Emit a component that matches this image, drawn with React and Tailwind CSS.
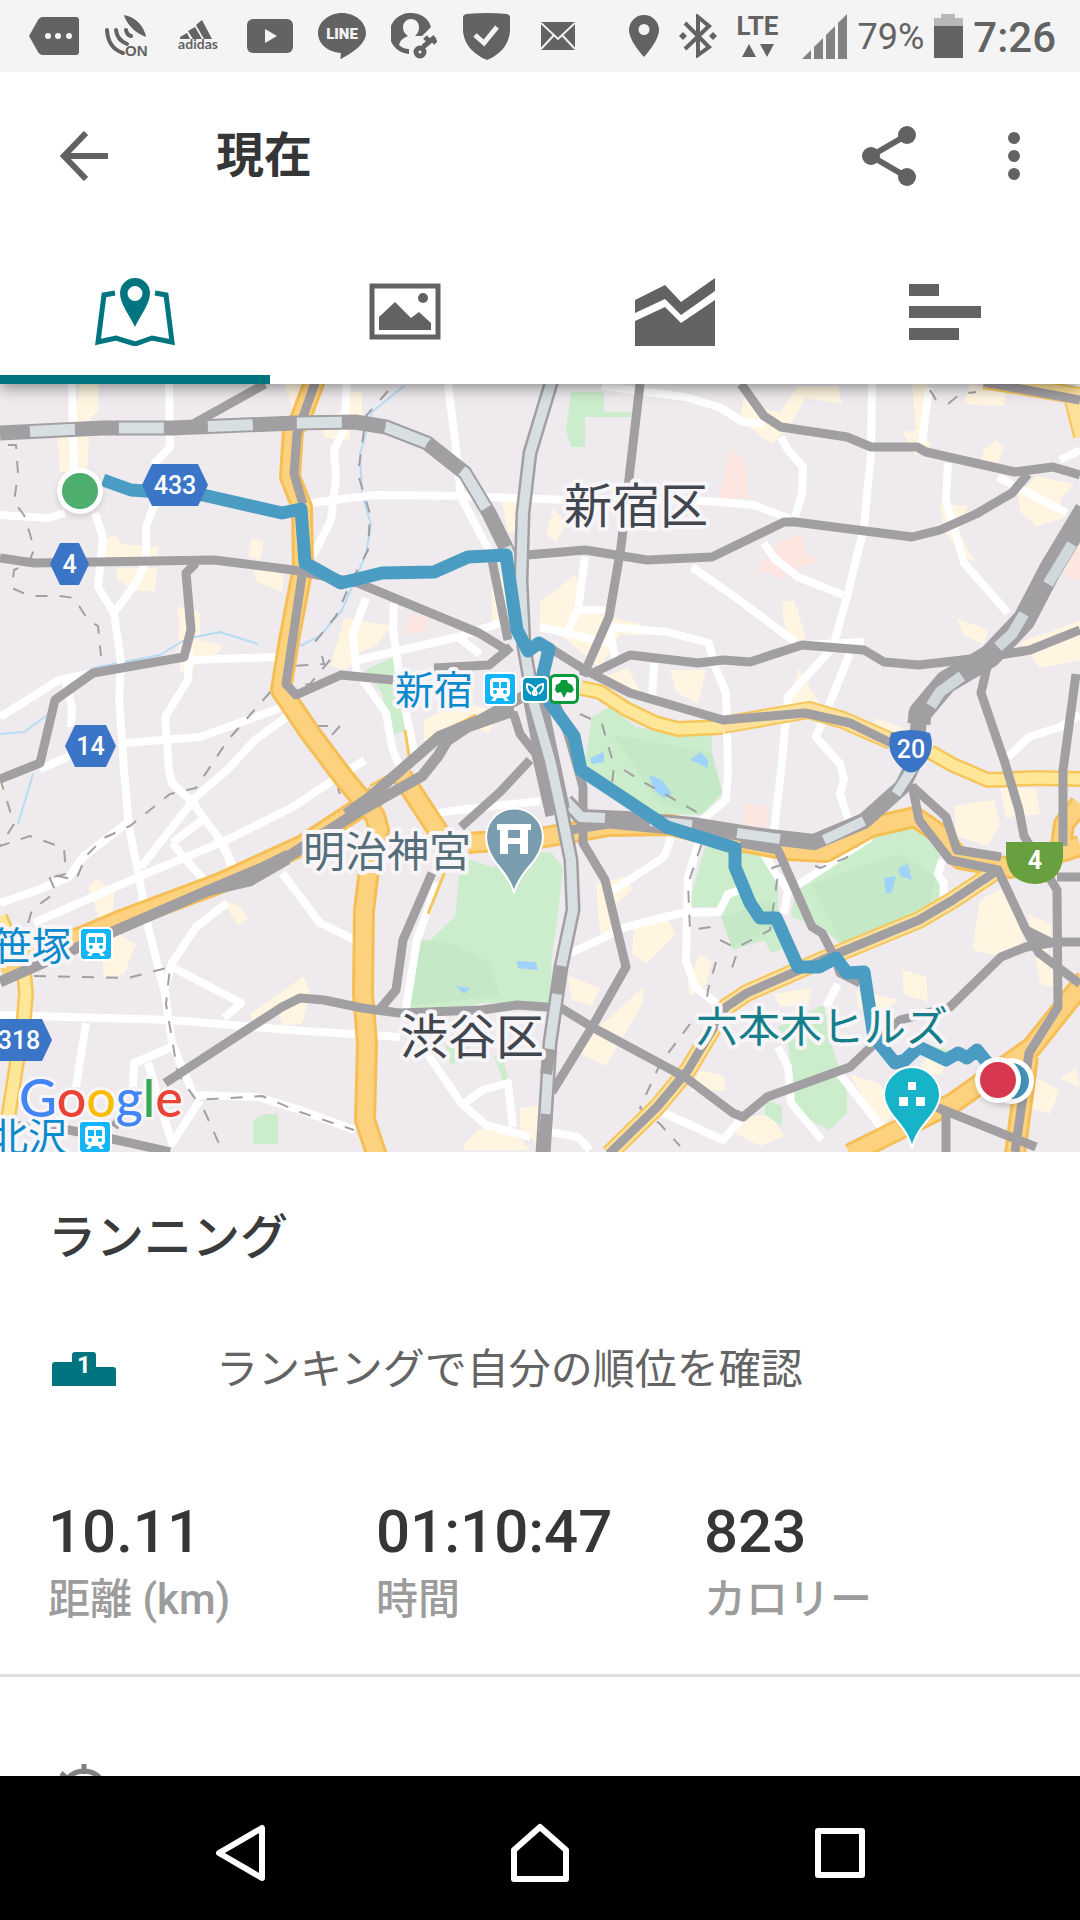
import React from 'react';

// ---------- map data (map canvas is 1080 x 768) ----------

const blocks = [
  'M80 0H99L98 28L90 34L87 88H60L57 50L72 46Z',
  'M284 0H312L296 34Z',
  'M345 8H362V34L350 40V56L325 54L318 36L345 26Z',
  'M103 158L114 150L122 160L158 163V174H105Z',
  'M117 184H158L155 208L134 206L117 196Z',
  'M252 154L264 158L260 176L248 172Z',
  'M254 182L284 190L282 208L256 198Z',
  'M178 222L200 228V256L224 262L216 270L196 278L192 288H180Z',
  'M344 234L392 242L376 262L360 268L346 286L330 282L338 256Z',
  'M500 110H520V146L508 150Z',
  'M492 204L506 184L516 214L508 250L492 238Z',
  'M424 336L460 316L500 330L488 350L470 340L440 364L424 356Z',
  'M744 12L760 24L780 28L798 2H838L842 20L806 14L788 44L772 60L740 36Z',
  'M912 0H928L922 50L932 60L916 72L902 48L916 46Z',
  'M970 0L1006 8L1004 22L964 20Z',
  'M996 56L1004 64L998 80L1014 86L980 80L984 66Z',
  'M1036 92L1074 100L1060 116L1064 134L1036 142L1020 128L1018 112Z',
  'M554 124L566 140L556 158L546 150Z',
  'M540 218L576 190L582 226L640 240L646 252L620 250L600 284L560 250L540 242Z',
  'M596 296L628 284L640 308L624 310Z',
  'M670 286H706L702 304L698 320L676 308Z',
  'M782 218L794 216L806 254L796 262L784 240Z',
  'M798 284L824 326L790 322Z',
  'M940 120L968 122L958 148L976 178L962 172L944 146Z',
  'M956 234L988 246L984 260L964 252Z',
  'M1020 258L1050 248L1080 236V276L1040 284Z',
  'M876 334L908 346L900 356L872 344Z',
  'M0 396L6 400L0 406Z',
  'M96 494L114 508L112 546L136 560L124 590L104 594L98 530L88 504Z',
  'M224 448L236 480L226 492Z',
  'M222 516L240 522L248 534L238 542Z',
  'M250 630L284 606L304 592L310 610L302 640L282 642L278 624L254 640Z',
  'M464 760L478 746L510 742L530 766H464Z',
  'M520 724L538 722V760L520 744Z',
  'M596 500L628 492L632 506L614 522L622 546L600 550Z',
  'M634 542L668 536L676 550L646 580L632 570Z',
  'M568 592L600 604L592 622L572 616Z',
  'M588 650L614 630L644 602L642 620L606 682L582 670Z',
  'M954 422L994 416L1000 440L988 462L956 452Z',
  'M1000 404H1036L1040 430L1006 434Z',
  'M980 516L1010 500L1024 556L1006 574L972 566Z',
  'M1028 530L1052 540L1048 570L1064 606L1040 600Z',
  'M902 586L926 592L928 618L904 610Z',
  'M700 570L712 578L706 600L690 612L688 598Z',
  'M774 610L812 604L808 622L780 622Z',
  'M856 606L898 616L880 630L858 624Z',
  'M700 686L724 692L726 706L690 708Z',
  'M930 662L946 672L942 690L920 690Z',
  'M1032 692L1060 706L1050 730L1030 724Z',
  'M1060 694L1076 684L1080 704Z',
  'M740 734L770 730L784 752L760 762L736 750Z',
  'M850 690L880 700L894 730L880 744Z',
];

const parks = [
  'M571 8H604V28H631V33H585V63H571L566 46Z',
  'M365 286L393 273L406 346L389 353L382 309Z',
  'M592 333L609 323L636 343L678 351H712V379L723 409L702 431L660 430L630 420L585 379Z',
  'M461 473L492 483L520 466L552 469L563 484L557 539L552 570L550 619H482L440 630L410 623L418 556L430 556L455 533Z',
  'M705 463L764 469L778 496V523L788 543L781 566L771 569L764 556L733 566L721 533L726 516L719 523H688Z',
  'M878 443L919 446L940 469L936 493L943 509L936 523L843 563L822 543L791 533L795 506Z',
  'M253 736L264 730H278V760H253Z',
  'M778 643L824 620L828 650L847 709V729L829 746L795 729L788 659Z',
  'M446 662L470 656L468 676L450 680Z',
  'M494 672L500 668L508 692L504 700Z',
  'M766 716L782 722V742L764 730Z',
  'M930 662L960 668L958 676L932 672Z',
];

const parkShades = [
  'M613 351L712 369L722 408L700 430L660 420Z',
  'M418 556L455 560L490 580L500 612L410 622Z',
  'M812 500L900 470L936 493L930 520L843 560Z',
  'M722 534L770 516L776 540L732 564Z',
];

const hospitals = [
  'M733 64L745 80L749 114H719L728 73Z',
  'M780 158L800 149L806 168L818 178L800 182L781 195L770 188L754 190L766 174Z',
  'M744 419L767 423V443L743 441Z',
  'M412 229L430 235L424 248L404 250Z',
  'M1072 168L1080 160V196L1064 192Z',
];

const ponds = [
  'M590 374L604 368V378L592 380Z',
  'M690 376L700 368L708 376V384Z',
  'M649 391L662 396L672 410L664 414L654 406Z',
  'M517 577L536 578L538 586L518 584Z',
  'M456 602L470 604L464 610Z',
  'M884 494L896 492L892 508L886 510Z',
  'M898 484L908 480L912 496L900 492Z',
];

const streets = [
  'M72 0L74 86M95 129L103 153L98 203L114 229L121 279L119 313L124 386L129 443L139 493L148 543L165 609L172 659L193 709',
  'M169 0L170 63L155 79L155 119L146 143V176L138 196L114 229',
  'M0 131L48 134L65 129',
  'M448 0L455 56L461 113L496 180',
  'M347 0L344 46L334 66L336 93L331 136L313 172',
  'M303 120L375 111L461 112L625 118L664 115L720 118L754 121L790 135',
  'M366 214L353 249L356 286L386 329L392 363L402 390',
  'M394 219L393 246L399 289L406 329L415 373',
  'M358 276L458 253L500 239M458 253L480 270',
  'M189 276L279 273',
  'M189 265L188 296L165 333L169 386L172 399L193 419L220 456L234 486',
  'M0 333L59 296L93 289M65 296L72 323L71 343',
  'M124 359L200 353L289 321M296 326L255 356L227 386L196 413L141 483',
  'M40 385L72 371',
  'M0 519L38 506L69 493L83 473L127 439',
  'M34 539L138 493L227 456L293 423L338 393L365 376',
  'M172 459L188 478L205 497M172 459L205 434',
  'M282 489L320 539L355 556',
  'M227 519L196 543L172 579L165 603',
  'M172 583L241 619L224 634',
  'M0 631L172 636L290 646L400 653',
  'M86 639L76 703M172 663L134 679L133 703M148 679L172 759L200 716',
  'M193 711L258 713L300 726L355 746',
  'M427 669L461 719L486 741L530 753M465 719L482 706L508 699L513 743',
  'M437 429L475 424L540 417',
  'M437 499L417 556L405 630',
  'M602 2L685 13L719 23L743 38L764 39',
  'M781 53L788 66L803 83L802 110L795 133',
  'M872 0L871 69L864 143L847 213L833 263L788 313L781 386L774 446',
  'M929 4L922 59M948 79L946 116L964 179L1008 229',
  'M850 269L816 353L840 380L844 395L840 410L850 440',
  'M692 183L742 218L795 258M802 261L864 258',
  'M764 159L775 175L798 193L843 211',
  'M585 173L578 226L568 246M578 226H606M540 243L609 259M609 240L616 280',
  'M612 243L667 248L709 259L714 280L726 309L728 386L726 416L702 436',
  'M654 279L652 313',
  'M998 93L1067 129M1080 66L1060 76',
  'M1008 373L1029 353L1060 343L1080 331',
  'M700 455L688 493L686 576L695 603L720 622',
  'M571 569L626 543L681 529L719 528L728 510L740 506',
  'M671 453L664 473L609 509',
  'M764 470L776 490L788 506L784 530',
  'M795 503L871 453M942 476L938 490L944 500L943 519',
  'M838 600L826 623M778 663L788 683L791 719L822 756',
  'M836 686L850 703L881 743M664 729L723 756L740 736M550 748L578 753L590 766',
];

const boundaries = [
  'M8 61H16L18 90L14 118L24 131L30 150L34 166L28 180L14 186L12 204L30 212L60 212L74 214L88 236L98 242L101 272',
  'M388 7L366 32L358 90L370 130L368 166L352 196L336 232L310 264',
  'M322 272L324 280L290 282M330 276L310 300L272 306L228 356L196 404L170 410L130 442L104 454L86 472L76 496L48 490L56 508L32 526L26 546',
  'M0 394L14 440L0 462L30 452L64 464L66 490L48 494',
  'M300 326L312 342L340 342L322 362L340 410',
  'M34 592L128 594L170 583L166 620L178 690L196 716L262 712L300 728L354 746M204 726L220 762',
  'M580 330L602 340L614 382L612 400',
  'M624 386L640 396L700 430L705 450L688 500L690 546L718 542M720 556L736 564L770 546L778 490L772 484L800 474L820 484L846 474L872 446',
  'M716 578L708 606L706 622M690 640L660 680L640 724L660 740L680 762M736 572L732 584',
  'M930 6L936 16M948 20L960 10L976 8',
];

const streams = [
  'M404 2L372 28L360 70L362 110L371 140L366 170L342 226L320 252L300 262',
  'M93 284L160 271L186 255L220 248L258 260',
  'M0 350L24 348L46 332M33 390L18 440',
];

const highways = [
  'M315 -4L300 36L293 46L290 93L302 123L303 183L289 256L281 306L310 349L344 394L375 432L379 446L370 479L364 526L363 609L367 659L365 736L377 772',
  'M402 392L440 450',
  'M0 583L86 551L124 535L220 499L303 461L358 425L376 412',
  'M468 459L540 454L609 442L671 441L733 456L788 466L826 468L871 443L915 433L940 450L960 475L1010 484L1080 462',
  'M1086 595L1032 663L953 719L884 753L850 770M1028 672L1015 770M1080 420L1064 440L1060 470',
];

const mainRoads = [
  'M609 770L657 723L688 686L726 623L747 609L822 576L919 536L953 516L998 486',
  'M723 341L809 326L843 336L891 357',
  'M984 -4L1080 12M1072 12L1082 52',
];

// single thin edges of roads that run beside a rail line
const roadEdges = ['M370 402L402 384L446 346L476 331', 'M405 346L410 378', 'M448 480L440 500L428 530'];

const yellowRoads = [
  'M581 304L600 308L626 325L655 339L678 345L723 343',
  'M930 368L953 381L988 396L1036 394L1080 395',
  'M0 533L24 589L26 609L24 633L8 735',
];

const rails = [
  'M195 39L265 0',
  'M0 174L34 179L214 176L293 186L358 199L479 249L505 265',
  'M196 179L186 189L191 246L184 273L93 289L55 316L40 379L0 395',
  'M316 -4L303 33L297 50L294 90L303 120M303 185L286 300L296 311L341 291L393 296',
  'M492 176L508 256M434 284L489 281L511 263',
  'M640 0L621 163L609 233L583 292',
  'M741 0L764 32L781 43L847 53L871 63L917 63L926 68L1015 88L1053 83L1080 91',
  'M1028 90L1012 109L976 130L940 146L912 153L795 138L784 138L712 173L647 176L585 166L527 171',
  'M591 290L630 271L698 279L723 276L750 278L802 261L864 266L884 278L919 281L988 273L1030 266L1080 246',
  'M990 270L981 309L1005 379L1019 426L1024 452L1057 506L1058 623L1029 669L1015 768',
  'M1076 290L1063 386L1063 462',
  'M550 264L585 286L630 309L723 336L805 329L850 339L891 359',
  'M461 443L500 408L530 376M432 489L403 556L396 606L380 625',
  'M165 699L282 623L300 614L324 616L362 624L399 629L482 626L517 621L561 624L592 643L685 693L733 729L743 733L767 713L850 683L871 663L900 636L950 623L1001 573L1026 563L1057 558H1080',
  'M556 320L568 350L580 392L583 403V459L605 496L626 583L592 643L552 708',
  'M740 459L778 466L812 543L822 549L836 576L840 589L860 599',
  'M912 400L919 436L950 476L998 486L1026 546L1039 569L1080 600M1026 546L1050 558',
  'M914 404L946 433L957 466L1001 473M1057 493H1080',
  'M936 723L1036 763M946 729V768',
  'M0 740L69 746L117 756L170 768M131 719L114 743',
  'M609 770L657 723L688 686L726 623L747 609L822 576L919 536L953 516L998 486',
  'M984 -2L1080 16',
  'M513 328L520 350L536 370L550 432M570 446L609 440L690 448',
];

const wideRails = [
  'M0 598L117 546L207 507L286 474L358 428L422 392L438 372L450 352',
  'M346 430L370 413L440 352L480 336L513 318L550 298',
];

const chuoLine = 'M566 417L581 433L626 435L692 441L754 451L814 458L864 437L902 403L916 375L919 333L946 296L990 272L1022 236L1050 186L1086 126';
const seibuLine = 'M0 49L103 44L172 44L296 39L355 38L386 43L427 59L465 89L489 129L512 176';
const yamanoteLine = 'M552 -4L530 69L523 129L521 196L524 263L534 320L550 376L561 426L571 476L573 526L561 583L550 659L543 770';

const route =
  'M103 96L131 106L203 111L282 129L301 125L305 179L341 199L382 189L434 188L468 173L506 171L517 246L528 267L539 259L549 265L543 290L550 319L574 352L581 386L667 443L735 464V483L750 519L760 534H776L798 583H819L836 574L847 589L864 588L874 653L895 679L905 676L919 663L946 676L958 669L967 674L977 666L990 682';

const lines = (list, color, width, extra = {}) =>
  list.map((d, i) => <path key={i} d={d} fill="none" stroke={color} strokeWidth={width} strokeLinejoin="round" {...extra} />);

const fills = (list, color) => list.map((d, i) => <path key={i} d={d} fill={color} />);

const TrainIcon = ({ x, y }) => (
  <g transform={`translate(${x} ${y})`}>
    <rect x="-1" y="-1" width="34" height="34" rx="5" fill="#fff" />
    <rect x="1" y="1" width="30" height="30" rx="3" fill="#12b5f8" />
    <path d="M10 5H22Q26 5 26 9V20Q26 24 22 24L25 28H21L19 25H13L11 28H7L10 24Q6 24 6 20V9Q6 5 10 5Z" fill="#fff" />
    <path d="M9 9H15V15H9ZM17 9H23V15H17Z" fill="#12b5f8" />
    <circle cx="11" cy="19" r="2" fill="#12b5f8" />
    <circle cx="21" cy="19" r="2" fill="#12b5f8" />
  </g>
);

const Hex = ({ x, y, w, label }) => (
  <g>
    <path d={`M${x} ${y + 21}L${x + 10} ${y}H${x + w - 10}L${x + w} ${y + 21}L${x + w - 10} ${y + 42}H${x + 10}Z`} fill="#3b75c8" />
    <text x={x + w / 2} y={y + 30} textAnchor="middle" fill="#fff" className="text-[25px] font-medium">{label}</text>
  </g>
);

const MapLabel = ({ x, y, color, className, children }) => (
  <text x={x} y={y} fill={color} stroke="#f7f5f7" strokeWidth="8" strokeLinejoin="round" paintOrder="stroke" className={className}>
    {children}
  </text>
);

const RouteMap = () => (
  <svg viewBox="0 0 1080 768" preserveAspectRatio="xMidYMid slice" className="block h-[768px] w-full" role="img" aria-label="ルート">
    <rect width="1080" height="768" fill="#eeeaee" />
    {fills(blocks, '#fff5e1')}
    {fills(hospitals, '#fde5e0')}
    {fills(parks, '#cbedcc')}
    {fills(parkShades, '#c5e8c6')}
    {fills(ponds, '#9fd3fb')}
    {lines(streams, '#b5dcf3', 2)}
    {lines(streets, '#ffffff', 8)}
    {lines(boundaries, '#a29fa3', 2, { strokeDasharray: '12 12' })}

    {lines(yellowRoads, '#f6c65a', 16)}
    {lines(yellowRoads, '#ffe799', 11)}
    {lines(highways, '#f6bf55', 22)}
    {lines(highways, '#fdd27e', 16)}
    {lines(mainRoads, '#f6c65a', 18)}
    {lines(mainRoads, '#fde09a', 14)}
    {lines(roadEdges, '#f6c65a', 3)}

    {lines(rails, '#a29fa3', 9)}
    {lines(wideRails, '#a29fa3', 11)}
    <path d="M192 516L226 496L286 466L290 480L252 502Z" fill="#a29fa3" />
    <path d="M436 358L456 340L512 318L516 332L470 348L446 364Z" fill="#a29fa3" />

    {lines([seibuLine], '#a29fa3', 15)}
    {lines([seibuLine], '#d7dfe2', 11, { strokeDasharray: '45 44', strokeDashoffset: -30 })}
    {lines([chuoLine], '#a29fa3', 16)}
    {lines(['M919 340L920 329L946 298L990 272L1024 236L1050 186L1086 126'], '#a29fa3', 23)}
    {lines(['M566 417L581 433L605 434M650 437L692 441M737 449L780 455M824 456L864 437M896 410L914 382'], '#d7dfe2', 10)}
    {lines(['M931 322L940 308L962 292M998 263L1012 250L1024 230M1048 200L1072 160'], '#d0d8db', 11)}
    {lines([yamanoteLine], '#a29fa3', 15)}
    {lines(['M534 310L542 350L558 426'], '#a29fa3', 24)}
    {lines([yamanoteLine], '#d7dfe2', 10)}
    {lines(['M562 582L557 610M550 665L546 690M547 730L543 770'], '#a29fa3', 12)}

    {lines([route], '#4a9cc2', 13)}

    <g className="drop-shadow-md">
      <circle cx="80" cy="107" r="23" fill="#fff" />
      <circle cx="80" cy="107" r="18" fill="#4eae6d" />
    </g>
    <g className="drop-shadow-md">
      <circle cx="1011" cy="697" r="23" fill="#fff" />
      <circle cx="1011" cy="697" r="18" fill="#4292b7" />
    </g>
    <g className="drop-shadow-md">
      <circle cx="998" cy="696" r="23" fill="#fff" />
      <circle cx="998" cy="696" r="18" fill="#d73850" />
    </g>

    <Hex x={142} y={80} w={66} label="433" />
    <Hex x={50} y={159} w={39} label="4" />
    <Hex x={65} y={341} w={51} label="14" />
    <Hex x={-14} y={635} w={66} label="318" />
    <path d="M891 349Q911 343 930 349Q937 370 918 386Q911 391 904 386Q884 370 891 349Z" fill="#3b75c8" />
    <text x="911" y="374" textAnchor="middle" fill="#fff" className="text-[25px] font-medium">20</text>
    <path d="M1006 458H1063V474Q1060 499 1035 500Q1009 499 1006 474Z" fill="#69a03f" />
    <text x="1035" y="485" textAnchor="middle" fill="#fff" className="text-[25px] font-bold">4</text>

    <MapLabel x={564} y={139} color="#41464f" className="text-[48px]">新宿区</MapLabel>
    <MapLabel x={400} y={670} color="#41464f" className="text-[48px]">渋谷区</MapLabel>
    <MapLabel x={303} y={483} color="#546e7a" className="text-[42px]">明治神宮</MapLabel>
    <MapLabel x={696} y={658} color="#147e8a" className="text-[42px]">六本木ヒルズ</MapLabel>
    <MapLabel x={395} y={320} color="#0a8acd" className="text-[39px]">新宿</MapLabel>
    <MapLabel x={-7} y={576} color="#0a8acd" className="text-[39px]">笹塚</MapLabel>
    <MapLabel x={-11} y={767} color="#0a8acd" className="text-[39px]">北沢</MapLabel>

    <TrainIcon x={484} y={289} />
    <TrainIcon x={80} y={544} />
    <TrainIcon x={79} y={737} />
    <rect x="521" y="292" width="28" height="27" rx="5" fill="#fff" />
    <rect x="523" y="294" width="24" height="23" rx="4" fill="#0a94c2" />
    <path d="M531 310Q526 306 527 300Q532 300 536 307Q538 311 534 311Q531 310 535 305Q538 310 536 311Q532 311 535 306Q539 300 543 300Q544 306 539 310" fill="none" stroke="#fff" strokeWidth="2" />
    <rect x="549" y="290" width="30" height="30" rx="6" fill="#0a9a3c" />
    <rect x="552" y="293" width="24" height="24" rx="3" fill="#fff" />
    <path d="M555 306L556 301L560 299L561 296H567L568 299L572 301L574 306L571 309L567 308L564 314L561 308L557 309Z" fill="#0a9a3c" />

    <path d="M514 508Q510 496 500 484Q486 468 486 453A28 28 0 0 1 543 453Q543 468 528 484Q518 496 514 508Z" fill="#799dae" stroke="#fff" strokeWidth="2" />
    <path d="M497 440H531V446H528V470H520V460H508V470H500V446H497ZM508 446V454H520V446Z" fill="#fff" fillRule="evenodd" />

    <path d="M912 764Q909 751 898 738Q884 722 884 711A28 28 0 0 1 940 711Q940 722 926 738Q915 751 912 764Z" fill="#17b3c8" stroke="#fff" strokeWidth="2" />
    <path d="M908 698H916V706H908ZM899 713H908V722H899ZM916 713H925V722H916Z" fill="#fff" />

    <text x="19" y="733" stroke="#f7f5f7" strokeWidth="6" strokeLinejoin="round" paintOrder="stroke" className="font-[Lato,sans-serif] text-[52px] font-medium">
      <tspan fill="#4285f4">G</tspan>
      <tspan fill="#ea4335">o</tspan>
      <tspan fill="#fbbc05">o</tspan>
      <tspan fill="#4285f4">g</tspan>
      <tspan fill="#34a853">l</tspan>
      <tspan fill="#ea4335">e</tspan>
    </text>
  </svg>
);

// ---------- status bar ----------

const notificationIcons = [
  // more
  <svg key="more" width="50" height="38" viewBox="0 0 50 38">
    <path d="M13 0H47Q50 0 50 3V35Q50 38 47 38H13Q11 38 9 35L0 19L9 3Q11 0 13 0Z" fill="currentColor" />
    <g fill="#f4f4f4"><circle cx="19" cy="19" r="3" /><circle cx="29" cy="19" r="3" /><circle cx="40" cy="19" r="3" /></g>
  </svg>,
  // satellite
  <svg key="gps" width="44" height="42" viewBox="0 0 44 42">
    <path d="M20 0Q28 1 35 8Q41 15 42 22Q32 18 27 12Q21 5 20 0Z" fill="currentColor" />
    <g fill="none" stroke="currentColor" strokeWidth="4" strokeLinecap="round">
      <path d="M22 15Q23 20 27 21M12 15Q13 25 23 29M3 15Q4 33 19 38" />
    </g>
    <text x="21" y="41" fill="currentColor" className="font-['Liberation_Sans',sans-serif] text-[15px] font-bold">ON</text>
  </svg>,
  // adidas
  <svg key="adidas" width="44" height="32" viewBox="0 0 44 32">
    <path d="M4 17L11 13L14 19H4ZM12 11L19 7L26 19H17ZM20 5L26 0L36 19H28Z" fill="currentColor" />
    <text x="22" y="29" textAnchor="middle" fill="currentColor" className="font-[Lato,sans-serif] text-[14px] font-bold">adidas</text>
  </svg>,
  // youtube
  <svg key="youtube" width="46" height="34" viewBox="0 0 46 34">
    <rect width="46" height="34" rx="6" fill="currentColor" />
    <path d="M18 10L30 17L18 24Z" fill="#f4f4f4" />
  </svg>,
  // line
  <svg key="line" width="48" height="46" viewBox="0 0 48 46">
    <path d="M24 0C37 0 48 9 48 20C48 31 34 40 23 46Q22 46 23 40C10 39 0 31 0 20C0 9 11 0 24 0Z" fill="currentColor" />
    <text x="24" y="26" textAnchor="middle" fill="#f4f4f4" className="font-[Roboto,sans-serif] text-[15px] font-black">LINE</text>
  </svg>,
  // account key
  <svg key="account" width="46" height="46" viewBox="0 0 46 46">
    <path d="M20 0A20 20 0 0 1 40 14L31 23L24 23Q28 20 28 14A8 8 0 0 0 12 14Q12 20 17 23Q9 26 8 32Q12 36 18 36V41A20 20 0 0 1 20 0Z" fill="currentColor" />
    <path d="M32 34L44 24M37 27L34 24M41 26L45 30" stroke="currentColor" strokeWidth="5" />
    <circle cx="29" cy="39" r="4" fill="none" stroke="currentColor" strokeWidth="5" />
  </svg>,
  // shield
  <svg key="shield" width="47" height="47" viewBox="0 0 47 47">
    <path d="M0 4Q0 2 3 1Q24 -1 44 1Q47 2 47 4V16C47 32 36 42 24 47C12 42 0 32 0 16Z" fill="currentColor" />
    <path d="M12 22L21 30L34 14" fill="none" stroke="#f4f4f4" strokeWidth="5" />
  </svg>,
  // mail
  <svg key="mail" width="34" height="28" viewBox="0 0 34 28">
    <rect width="34" height="28" fill="currentColor" />
    <path d="M0 1L17 17L34 1M0 27L13 13M34 27L21 13" fill="none" stroke="#f4f4f4" strokeWidth="2" />
  </svg>,
];

const StatusBar = () => (
  <div className="flex h-18 shrink-0 items-center justify-between bg-[#f4f4f4] pl-[18px] pr-6 text-[#636363]">
    <div className="flex items-center">
      {notificationIcons.map((icon) => (
        <div key={icon.key} className="flex w-18 justify-center">{icon}</div>
      ))}
    </div>
    <div className="flex items-center gap-6">
      <div className="flex items-center gap-5">
        <svg width="30" height="42" viewBox="0 0 30 42">
          <path d="M15 0A15 15 0 0 0 0 15C0 26 15 42 15 42S30 26 30 15A15 15 0 0 0 15 0ZM15 9A5 5 0 1 1 15 20A5 5 0 1 1 15 9Z" fill="currentColor" fillRule="evenodd" />
        </svg>
        <svg width="38" height="44" viewBox="0 0 38 44">
          <path d="M6 9L30 33L19 41V3L30 12L6 35" fill="none" stroke="currentColor" strokeWidth="4" />
          <path d="M4 18L8 22L4 26L0 22ZM34 18L38 22L34 26L30 22Z" fill="currentColor" />
        </svg>
        <div className="flex flex-col items-center gap-2">
          <span className="text-[26px] leading-5 font-bold">LTE</span>
          <svg width="32" height="13" viewBox="0 0 32 13">
            <path d="M0 13L7 0L14 13ZM18 0H32L25 13Z" fill="currentColor" />
          </svg>
        </div>
      </div>
      <div className="flex items-center gap-2.5">
        <svg width="45" height="45" viewBox="0 0 45 45" className="text-[#828282]">
          <path d="M0 45L9 36V45ZM12 45V33L21 24V45ZM24 45V21L33 12V45ZM36 45V9L45 0V45Z" fill="currentColor" />
        </svg>
        <span className="pt-0.5 text-4xl">79%</span>
        <svg width="29" height="44" viewBox="0 0 29 44">
          <path d="M7 0H21V4H29V13H0V4H7Z" fill="#b8b8b8" />
          <path d="M0 12H29V44H0Z" fill="currentColor" />
        </svg>
        <span className="pt-0.5 text-[42px] font-medium">7:26</span>
      </div>
    </div>
  </div>
);

// ---------- header and tabs ----------

const Header = () => (
  <header className="relative z-20 flex h-42 shrink-0 items-center bg-white px-15 text-[#616361]">
    <button type="button" aria-label="戻る">
      <svg width="48" height="50" viewBox="0 0 48 50">
        <path d="M48 25H4M26 2L4 25L26 48" fill="none" stroke="currentColor" strokeWidth="6" />
      </svg>
    </button>
    <h1 className="ml-27 flex-1 text-5xl font-bold text-[#353638]">現在</h1>
    <button type="button" aria-label="共有" className="mr-23">
      <svg width="54" height="60" viewBox="0 0 54 60">
        <path d="M45 9L9 30L45 51" fill="none" stroke="currentColor" strokeWidth="6" />
        <g fill="currentColor"><circle cx="45" cy="9" r="9" /><circle cx="9" cy="30" r="9" /><circle cx="45" cy="51" r="9" /></g>
      </svg>
    </button>
    <button type="button" aria-label="メニュー">
      <svg width="12" height="48" viewBox="0 0 12 48" fill="currentColor">
        <circle cx="6" cy="6" r="6" /><circle cx="6" cy="24" r="6" /><circle cx="6" cy="42" r="6" />
      </svg>
    </button>
  </header>
);

const tabs = [
  {
    label: 'マップ',
    icon: (
      <>
        <path d="M20 15L9 17L3 64L21 60L40 66L57 60L77 64L71 17L60 15" fill="none" stroke="currentColor" strokeWidth="5" />
        <path d="M40 0A15 15 0 0 0 25 15C25 26 35 38 40 49C45 38 55 26 55 15A15 15 0 0 0 40 0ZM40 8A7 7 0 1 1 40 23A7 7 0 1 1 40 8Z" fill="currentColor" fillRule="evenodd" />
      </>
    ),
  },
  {
    label: '写真',
    icon: (
      <>
        <rect x="7" y="8" width="66" height="51" fill="none" stroke="currentColor" strokeWidth="5" />
        <path d="M14 52V39L30 24L46 40L54 34L66 45V52Z" fill="currentColor" />
        <circle cx="58" cy="20" r="5" fill="currentColor" />
      </>
    ),
  },
  {
    label: 'グラフ',
    icon: <path d="M0 22L30 7L46 24L80 0V13L46 37L30 21L0 35ZM0 43L30 29L46 45L80 22V68H0Z" fill="currentColor" />,
  },
  {
    label: 'ラップ',
    icon: <path d="M4 6H34V18H4ZM4 28H76V40H4ZM4 50H54V62H4Z" fill="currentColor" />,
  },
];

const TabBar = () => (
  <div role="tablist" className="relative z-10 grid h-36 shrink-0 grid-cols-4 bg-white shadow-[0_4px_14px_rgba(0,0,0,0.4)]">
    {tabs.map((tab, i) => (
      <button
        key={tab.label}
        type="button"
        role="tab"
        aria-label={tab.label}
        aria-selected={i === 0}
        className={`flex items-center justify-center ${i === 0 ? 'text-[#00757f] shadow-[inset_0_-9px_0_#00757f]' : 'text-[#616361]'}`}
      >
        <svg width="80" height="68" viewBox="0 0 80 68">{tab.icon}</svg>
      </button>
    ))}
  </div>
);

// ---------- workout summary ----------

const stats = [
  { value: '10.11', label: '距離 (km)' },
  { value: '01:10:47', label: '時間' },
  { value: '823', label: 'カロリー' },
];

const Summary = () => (
  <section className="pt-[50px]">
    <h2 className="px-12 text-5xl leading-[72px] font-medium text-[#3a3b3c]">ランニング</h2>
    <a href="#ranking" className="mt-15 flex items-center px-12 text-[#636463]">
      <svg width="72" height="36" viewBox="0 0 72 36">
        <path d="M4 13Q4 10 7 10H24V3Q24 0 27 0H45Q48 0 48 3V15H65Q68 15 68 18V34H4Z" fill="#00757f" />
        <text x="36" y="21" textAnchor="middle" fill="#fff" className="text-[24px] font-bold">1</text>
      </svg>
      <span className="ml-24 text-[42px] leading-[72px]">ランキングで自分の順位を確認</span>
    </a>
    <dl className="mt-[90px] grid grid-cols-3 px-12">
      {stats.map((s) => (
        <div key={s.label} className="flex flex-col-reverse">
          <dt className="text-[42px] leading-16 font-medium text-[#9b9c9b]">{s.label}</dt>
          <dd className="text-6xl leading-[72px] font-medium text-[#353638]">{s.value}</dd>
        </div>
      ))}
    </dl>
    <div className="mt-[42px] h-[3px] bg-[#dfdfdf]" />
    <div className="mt-[87px] px-15 text-[#808080]">
      <svg width="48" height="54" viewBox="0 0 48 54" fill="none" stroke="currentColor" strokeWidth="5">
        <circle cx="24" cy="29" r="22" />
        <path d="M24 0V10M1 9L8 15" />
      </svg>
    </div>
  </section>
);

const NavBar = () => (
  <nav className="grid h-36 shrink-0 grid-cols-3 bg-black px-[90px] pt-2.5 text-white">
    <button type="button" aria-label="戻る" className="flex items-center justify-center">
      <svg width="50" height="60" viewBox="0 0 50 60" fill="none" stroke="currentColor" strokeWidth="6" strokeLinejoin="round">
        <path d="M47 5V55L4 30Z" />
      </svg>
    </button>
    <button type="button" aria-label="ホーム" className="flex items-center justify-center">
      <svg width="60" height="60" viewBox="0 0 60 60" fill="none" stroke="currentColor" strokeWidth="6" strokeLinejoin="round">
        <path d="M4 27L30 4L56 27V56H4Z" />
      </svg>
    </button>
    <button type="button" aria-label="履歴" className="flex items-center justify-center">
      <svg width="50" height="50" viewBox="0 0 50 50" fill="none" stroke="currentColor" strokeWidth="6" strokeLinejoin="round">
        <rect x="3" y="3" width="44" height="44" />
      </svg>
    </button>
  </nav>
);

const App = () => (
  <div className="flex h-screen flex-col overflow-hidden bg-white font-[Roboto,'Noto_Sans_CJK_JP',sans-serif]">
    <StatusBar />
    <Header />
    <TabBar />
    <main className="min-h-0 flex-1 overflow-hidden">
      <RouteMap />
      <Summary />
    </main>
    <NavBar />
  </div>
);

export default App;
